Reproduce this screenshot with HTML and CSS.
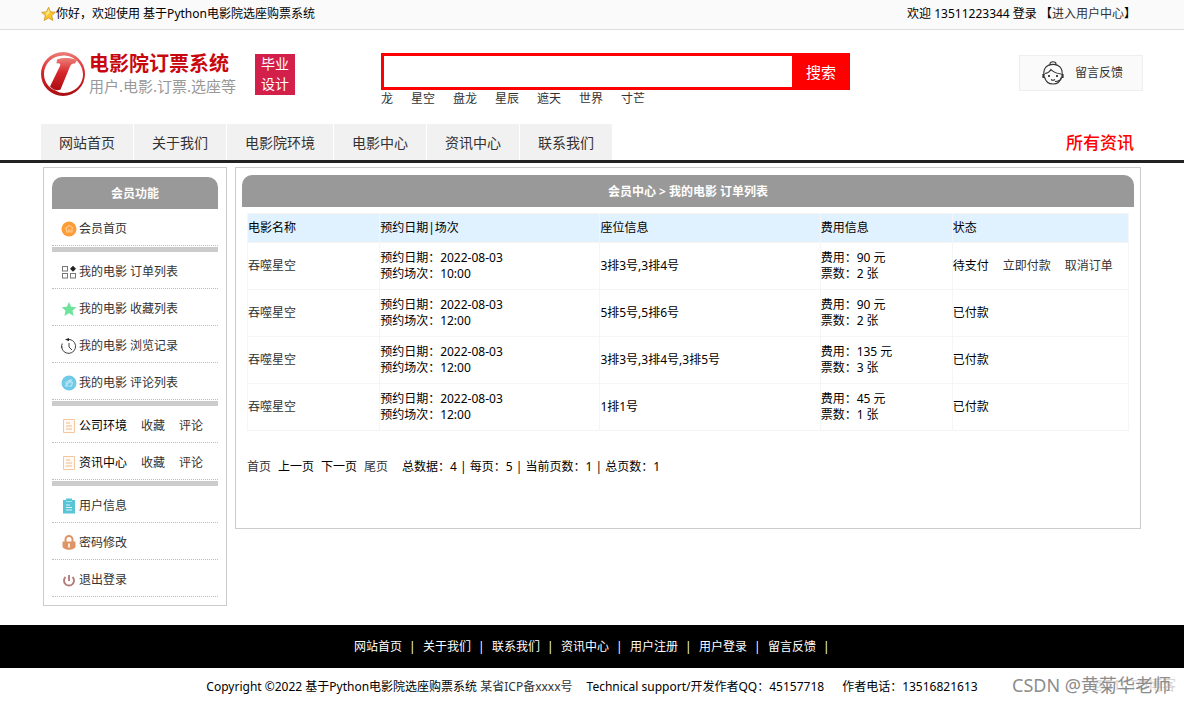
FILE: index.html
```html
<!DOCTYPE html>
<html lang="zh-CN">
<head>
<meta charset="utf-8">
<title>电影院订票系统</title>
<link rel="stylesheet" href="styles.css">
</head>
<body>
<div class="topbar">
  <div class="wrap topbar-in">
    <span class="hello"><svg class="star" viewBox="0 0 16 16"><path d="M8 .8l2.1 4.9 5.2.5-3.9 3.5 1.2 5.2L8 12.200l-4.600 2.700 1.200-5.200L.7 6.200l5.200-.5z" fill="#fbc62c" stroke="#c98d1c" stroke-width=".8"/><path d="M8 2.500l1.500 3.700-3.500 4L5.300 7 2.500 6.600l3.900-.3z" fill="#ffe789"/></svg>你好，欢迎使用 基于Python电影院选座购票系统</span>
    <span>欢迎 13511223344 登录 【<a href="#">进入用户中心</a>】</span>
  </div>
</div>

<header class="wrap header">
  <div class="brand">
    <svg class="logo" viewBox="0 0 44 44">
      <defs><linearGradient id="red" x1="0" y1="0" x2="0" y2="1"><stop offset="0" stop-color="#ec7f78"/><stop offset=".45" stop-color="#d8262a"/><stop offset="1" stop-color="#a90e12"/></linearGradient></defs>
      <path fill="url(#red)" fill-rule="evenodd" d="M22 0a22 22 0 1 1 0 44a22 22 0 1 1 0-44zM22.500 3.500C11 3.500 3 12 3 22c0 6 3 11.500 8 15l3.500 1.500C18 41 23 41.500 27 40.500 36 38.500 42 31 42 22.500 42 12 33 3.500 22.500 3.500z"/>
      <path fill="url(#red)" d="M16 7.500c6-2 13-2 20 .5l-2 3.500c-2.500-.5-4 .5-5 3L19.500 37.500c-2 1.500-7 1-10.500-3L19 14c.8-2 0-3-3.500-2.500z"/>
    </svg>
    <div class="brand-text">
      <strong class="brand-title">电影院订票系统</strong>
      <span class="brand-sub">用户.电影.订票.选座等</span>
    </div>
    <div class="stamp">毕业<br>设计</div>
  </div>
  <div class="search">
    <form class="search-form">
      <input class="search-input" type="text" aria-label="搜索">
      <button class="search-btn" type="button">搜索</button>
    </form>
    <div class="hot"><a href="#">龙</a><a href="#">星空</a><a href="#">盘龙</a><a href="#">星辰</a><a href="#">遮天</a><a href="#">世界</a><a href="#">寸芒</a></div>
  </div>
  <a class="feedback" href="#">
    <svg class="face" viewBox="0 0 22 24" fill="none" stroke="#333" stroke-width="1.100"><path d="M8 3c0-3 6-3 6 0"/><path d="M6 4.500q5-2.500 10 0"/><path d="M2 14C1 7 5 3.500 11 3.500S21 7 20 14"/><path d="M2.500 16c1 4 4 7 8.500 7s7.500-3 8.500-7"/><path d="M3 12.500c3-.5 5-2 6-4 2.500 3 6 4 10 4.500"/><path d="M1.500 13v4M20.500 13v4" stroke-width="2.200"/><path d="M19.500 17c-1 2.500-3.500 3.500-6.500 3.500"/><path d="M9 18.500q2 1.500 4 0"/><path d="M7 14v2M15 14v2" stroke-width="1.800"/></svg>
    留言反馈
  </a>
</header>

<div class="navbar">
  <div class="wrap navbar-in">
    <nav class="nav"><a href="#">网站首页</a><a href="#">关于我们</a><a href="#">电影院环境</a><a href="#">电影中心</a><a href="#">资讯中心</a><a href="#">联系我们</a></nav>
    <a class="all-news" href="#">所有资讯</a>
  </div>
</div>

<div class="wrap columns">
  <aside class="panel side">
    <h2 class="panel-title">会员功能</h2>
    <ul class="menu">
      <li><svg class="ico" viewBox="0 0 16 16"><circle cx="8" cy="8" r="7.500" fill="#ff9c35"/><path d="M4 8l4-3.500L12 7M5.500 7.500v3.500h2V9h1.500v2h2V6.500" fill="none" stroke="#ffc78c" stroke-width="1.200"/></svg><a href="#">会员首页</a></li>
    </ul>
    <ul class="menu">
      <li><svg class="ico" viewBox="0 0 16 16"><g fill="none" stroke="#777"><rect x="1.500" y="2.500" width="5" height="4.500"/><rect x="1.500" y="9.500" width="5" height="4.500"/><rect x="9.500" y="9.500" width="5" height="4.500"/></g><path d="M12 1.800l3 3-3 3-3-3z" fill="#222"/></svg><a href="#">我的电影 订单列表</a></li>
      <li><svg class="ico" viewBox="0 0 16 16"><path d="M8 1l2.200 4.800 5.100.5-3.800 3.500 1.100 5.200L8 12.300 3.400 15l1.100-5.200L.7 6.300l5.100-.5z" fill="#6fe39c"/></svg><a href="#">我的电影 收藏列表</a></li>
      <li><svg class="ico" viewBox="0 0 16 16"><path d="M1.200 5.500A7 7 0 1 0 9 1.500H6M8 5v4l3 3" fill="none" stroke="#444"/><path d="M4 1.500L8 0v3.300z" fill="#222"/><path d="M.8 8v2" stroke="#444"/></svg><a href="#">我的电影 浏览记录</a></li>
      <li><svg class="ico" viewBox="0 0 16 16"><circle cx="8" cy="8" r="7.500" fill="#70c9e6"/><path d="M5 7.500l4.500-2.700v2.700h2L10.500 11H5.500zM4 11l7-6" fill="none" stroke="#b9e6f4" stroke-width="1.200"/></svg><a href="#">我的电影 评论列表</a></li>
    </ul>
    <ul class="menu">
      <li><svg class="ico" viewBox="0 0 16 16"><path d="M2.500 1.500h11v13h-11z" fill="#fffaf5" stroke="#f3c69f"/><path d="M5 5h4M5 8h6M5 11h6" stroke="#f0b98a"/></svg><span>公司环境</span><a class="sub" href="#">收藏</a><a class="sub" href="#">评论</a></li>
      <li><svg class="ico" viewBox="0 0 16 16"><path d="M2.500 1.500h11v13h-11z" fill="#fffaf5" stroke="#f3c69f"/><path d="M5 5h4M5 8h6M5 11h6" stroke="#f0b98a"/></svg><span>资讯中心</span><a class="sub" href="#">收藏</a><a class="sub" href="#">评论</a></li>
    </ul>
    <ul class="menu">
      <li><svg class="ico" viewBox="0 0 16 16"><path d="M2 2h3V.5h6V2h3v13.500H2z" fill="#58c5d6"/><path d="M5 3.500h6" stroke="#a6e2eb"/><path d="M5 7h4M5 9.500h6M5 12h6" stroke="#d7f3f7"/></svg><a href="#">用户信息</a></li>
      <li><svg class="ico" viewBox="0 0 16 16"><path d="M4.500 7V4.500a3.500 3.500 0 0 1 7 0V7" fill="none" stroke="#df9465" stroke-width="2"/><path d="M1.500 6.500h13V11c0 5-13 5-13 0z" fill="#df9465"/><path d="M8 8.500v4" stroke="#fff" stroke-width="1.600"/></svg><a href="#">密码修改</a></li>
      <li><svg class="ico" viewBox="0 0 16 16"><path d="M4.500 5a5 5 0 1 0 7 0M8 3v6" fill="none" stroke="#b37d7d" stroke-width="1.900"/></svg><a href="#">退出登录</a></li>
    </ul>
  </aside>

  <main class="panel main">
    <h1 class="panel-title">会员中心 &gt; 我的电影 订单列表</h1>
    <div class="content">
      <table class="orders">
        <thead><tr><th class="c15">电影名称</th><th class="c25">预约日期|场次</th><th class="c25">座位信息</th><th class="c15">费用信息</th><th class="c20">状态</th></tr></thead>
        <tbody>
          <tr><td><a href="#">吞噬星空</a></td><td>预约日期：2022-08-03<br>预约场次：10:00</td><td>3排3号,3排4号</td><td>费用：90 元<br>票数：2 张</td><td>待支付<a class="sub" href="#">立即付款</a><a class="sub" href="#">取消订单</a></td></tr>
          <tr><td><a href="#">吞噬星空</a></td><td>预约日期：2022-08-03<br>预约场次：12:00</td><td>5排5号,5排6号</td><td>费用：90 元<br>票数：2 张</td><td>已付款</td></tr>
          <tr><td><a href="#">吞噬星空</a></td><td>预约日期：2022-08-03<br>预约场次：12:00</td><td>3排3号,3排4号,3排5号</td><td>费用：135 元<br>票数：3 张</td><td>已付款</td></tr>
          <tr><td><a href="#">吞噬星空</a></td><td>预约日期：2022-08-03<br>预约场次：12:00</td><td>1排1号</td><td>费用：45 元<br>票数：1 张</td><td>已付款</td></tr>
        </tbody>
      </table>
      <div class="pager"><a href="#">首页</a><span>上一页</span><span>下一页</span><a href="#">尾页</a><span class="totals">总数据：4 | 每页：5 | 当前页数：1 | 总页数：1</span></div>
    </div>
  </main>
</div>

<footer>
  <div class="foot-nav"><a href="#">网站首页</a><i>|</i><a href="#">关于我们</a><i>|</i><a href="#">联系我们</a><i>|</i><a href="#">资讯中心</a><i>|</i><a href="#">用户注册</a><i>|</i><a href="#">用户登录</a><i>|</i><a href="#">留言反馈</a><i>|</i></div>
  <div class="copyright">
    <span>Copyright ©2022 基于Python电影院选座购票系统 <a href="#">某省ICP备xxxx号</a></span><span>Technical support/开发作者QQ：45157718</span><span>作者电话：13516821613</span>
    <div class="mark mark-faint">@51CTO博客</div>
    <div class="mark">CSDN @黄菊华老师</div>
  </div>
</footer>
</body>
</html>
```
FILE: styles.css
```css
* { box-sizing: border-box; }
body { margin: 0; background: #fff; color: #000; font: 12px/16px "Noto Sans", "Noto Sans CJK SC", sans-serif; }
a { color: #333; text-decoration: none; }
ul { list-style: none; margin: 0; padding: 0; }
h1, h2 { margin: 0; }
svg { flex: none; }
.wrap { max-width: 1102px; margin: 0 auto; }

.topbar { background: #fafafa; border-bottom: 1px solid #ddd; }
.topbar-in { display: flex; justify-content: space-between; align-items: center; height: 29px; padding: 0 7px 2px 0; }
.hello { display: flex; align-items: center; }
.star { width: 15px; height: 16px; }

.header { display: flex; align-items: flex-start; height: 94px; padding-top: 22px; }
.brand { display: flex; width: 340px; }
.logo { width: 44px; height: 44px; }
.brand-text { display: flex; flex-direction: column; width: 170px; padding-left: 4px; white-space: nowrap; }
.brand-title { color: #c7090f; font-size: 20px; line-height: 24px; }
.brand-sub { color: #999; font-size: 15px; line-height: 20px; }
.stamp { width: 40px; height: 41px; margin-top: 2px; background: #d3204a; color: #fff; font-size: 14px; line-height: 20px; text-align: center; }
.search { width: 469px; padding-top: 1px; }
.search-form { display: flex; height: 37px; }
.search-input { flex: 1; min-width: 0; border: 3px solid #f00; border-right: 0; padding: 0 8px; outline: 0; font: inherit; font-size: 14px; }
.search-btn { width: 58px; padding: 0; border: 0; background: #f00; color: #fff; font: inherit; font-size: 15px; }
.hot { display: flex; gap: 18px; line-height: 18px; }
.feedback { display: flex; align-items: center; gap: 11px; width: 124px; height: 36px; margin: 3px 0 0 auto; padding-left: 22px; border: 1px solid #eee; background: #fafafa; }
.face { width: 22px; height: 24px; }

.navbar { border-bottom: 3px solid #222; }
.navbar-in { display: flex; justify-content: space-between; }
.nav { display: flex; gap: 1px; }
.nav a { height: 36px; padding: 0 18px; background: #f1f1f1; font-size: 14px; line-height: 38px; }
.all-news { height: 36px; padding-right: 9px; color: #f00; font-size: 17px; font-weight: 500; line-height: 38px; }

.columns { display: flex; align-items: flex-start; gap: 8px; padding: 4px 2px 19px; }
.panel { border: 1px solid #ccc; }
.side { width: 184px; padding: 9px 8px 8px; }
.main { flex: 1; padding: 7px 6px 53px; }
.panel-title { height: 32px; border-radius: 10px 10px 0 0; background: #999; color: #fff; font-size: 12px; font-weight: bold; line-height: 34px; text-align: center; }
.menu + .menu { margin-top: 1px; border-top: 5px solid #ccc; }
.menu li { display: flex; align-items: center; height: 37px; padding: 3px 0 0 9px; border-bottom: 1px dotted #bbb; }
.ico { width: 16px; height: 16px; margin-right: 2px; }
.sub { margin-left: 14px; }

.content { padding: 6px 5px 0; }
.orders { width: 100%; table-layout: fixed; border-collapse: collapse; }
.orders th, .orders td { padding: 0; border: 1px solid #f5f5f5; text-align: left; font-weight: normal; }
.orders th { height: 29px; background: #e0f2ff; }
.orders td { height: 47px; }
.c15 { width: 15%; }
.c20 { width: 20%; }
.c25 { width: 25%; }
.pager { display: flex; gap: 7px; padding-top: 28px; }
.totals { margin-left: 7px; }

.foot-nav { display: flex; justify-content: center; height: 43px; background: #000; color: #fff; line-height: 44px; }
.foot-nav a { color: #fff; }
.foot-nav i { width: 21px; padding-left: 7px; font-style: normal; }
.foot-nav i:last-child { width: 14px; }
.copyright { position: relative; display: flex; justify-content: center; gap: 14px; height: 35px; line-height: 38px; }
.copyright span + span + span { margin-left: 4px; }
.mark { position: absolute; right: 13px; top: 0; color: #8c8c8c; font-size: 18px; line-height: 34px; }
.mark-faint { right: 8px; color: #d5d5d5; font-size: 14px; }
```
